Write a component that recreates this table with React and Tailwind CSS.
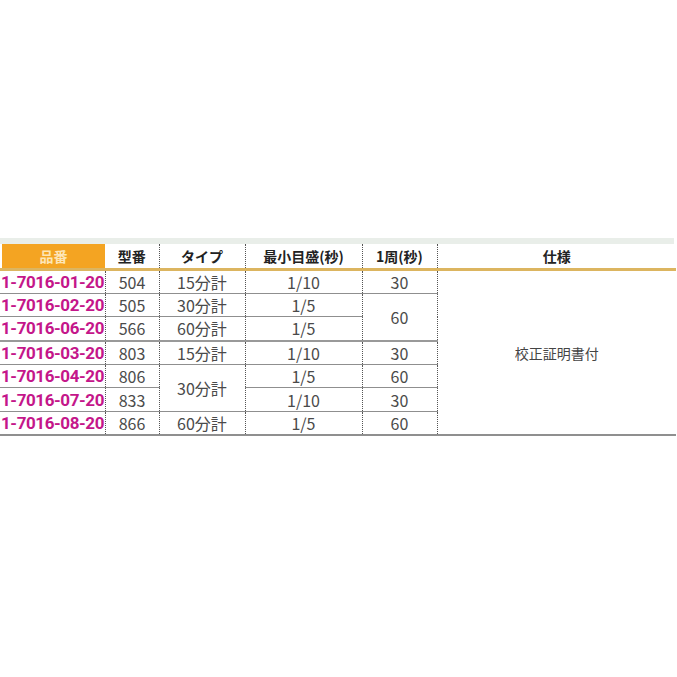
import React from 'react'

const cell =
  'p-0 leading-[18px] text-center text-[16px] font-normal text-[#4a4a4a] border-b border-r border-[#8f8f8f] [border-right-style:dotted] [border-right-color:#555]'
const code =
  'p-0 pl-[1px] leading-[18px] text-left text-[17px] font-bold tracking-[-0.4px] text-[#c4168a] border-b border-r border-[#8f8f8f] [border-right-style:dotted] [border-right-color:#555] [font-family:Roboto,"Liberation_Sans",sans-serif]'
const head =
  'p-0 leading-[18px] text-center text-[14px] font-bold text-[#222] border-b-[3px] border-r border-b-[#dcb560] [border-right-style:dotted] [border-right-color:#555]'

function App() {
  return (
    <div className="w-[677px] h-[677px] bg-white pt-[238px] [font-family:'Noto_Sans_CJK_JP',sans-serif]">
      {/* light strip above header */}
      <div className="h-[6px] w-[674px] bg-[#e9eee9]" />
      <table className="w-[676px] border-collapse table-fixed">
        <colgroup>
          <col className="w-[105px]" />
          <col className="w-[54px]" />
          <col className="w-[86px]" />
          <col className="w-[117px]" />
          <col className="w-[75px]" />
          <col />
        </colgroup>
        <thead>
          <tr className="h-[25px]">
            <th className="p-0 pl-[2px] border-b-[3px] border-b-[#dcb560]">
              <div className="h-[24px] bg-[#f4a422] text-[#fde6b8] text-[14px] font-bold flex items-center justify-center">
                品番
              </div>
            </th>
            <th className={head}>型番</th>
            <th className={head}>タイプ</th>
            <th className={head}>最小目盛(秒)</th>
            <th className={head}>1周(秒)</th>
            <th className={head + ' [border-right-style:none]'}>仕様</th>
          </tr>
        </thead>
        <tbody>
          <tr className="h-[23.7px]">
            <td className={code}>1-7016-01-20</td>
            <td className={cell}>504</td>
            <td className={cell}>15分計</td>
            <td className={cell}>1/10</td>
            <td className={cell}>30</td>
            <td rowSpan={7} className="p-0 leading-[18px] text-center text-[14px] text-[#444] border-b-2 border-[#8f8f8f]">
              校正証明書付
            </td>
          </tr>
          <tr className="h-[23.7px]">
            <td className={code}>1-7016-02-20</td>
            <td className={cell}>505</td>
            <td className={cell}>30分計</td>
            <td className={cell}>1/5</td>
            <td rowSpan={2} className={cell + ' border-b-2 border-b-[#999]'}>60</td>
          </tr>
          <tr className="h-[23.7px]">
            <td className={code + ' border-b-2 border-b-[#999]'}>1-7016-06-20</td>
            <td className={cell + ' border-b-2 border-b-[#999]'}>566</td>
            <td className={cell + ' border-b-2 border-b-[#999]'}>60分計</td>
            <td className={cell + ' border-b-2 border-b-[#999]'}>1/5</td>
          </tr>
          <tr className="h-[23.7px]">
            <td className={code}>1-7016-03-20</td>
            <td className={cell}>803</td>
            <td className={cell}>15分計</td>
            <td className={cell}>1/10</td>
            <td className={cell}>30</td>
          </tr>
          <tr className="h-[23.7px]">
            <td className={code}>1-7016-04-20</td>
            <td className={cell}>806</td>
            <td rowSpan={2} className={cell}>30分計</td>
            <td className={cell}>1/5</td>
            <td className={cell}>60</td>
          </tr>
          <tr className="h-[23.7px]">
            <td className={code}>1-7016-07-20</td>
            <td className={cell}>833</td>
            <td className={cell}>1/10</td>
            <td className={cell}>30</td>
          </tr>
          <tr className="h-[23.7px]">
            <td className={code + ' border-b-2 border-b-[#8f8f8f]'}>1-7016-08-20</td>
            <td className={cell + ' border-b-2'}>866</td>
            <td className={cell + ' border-b-2'}>60分計</td>
            <td className={cell + ' border-b-2'}>1/5</td>
            <td className={cell + ' border-b-2'}>60</td>
          </tr>
        </tbody>
      </table>
    </div>
  )
}

export default App
